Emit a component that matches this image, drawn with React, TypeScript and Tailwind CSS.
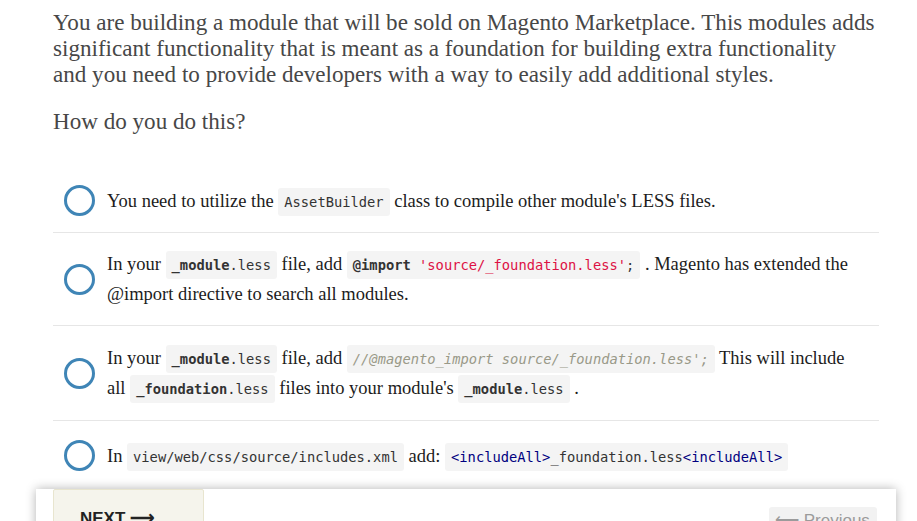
const serif = { fontFamily: '"Liberation Serif", Georgia, serif' }

function Code({ children }: { children: React.ReactNode }) {
  return (
    <code className="inline-block align-baseline bg-[#f4f4f4] rounded-[3px] px-[6px] py-[5px] leading-[18px] text-[13.75px] text-[#333] font-['DejaVu_Sans_Mono','Liberation_Mono',monospace]">
      {children}
    </code>
  )
}

function Radio() {
  return <div className="shrink-0 w-[31px] h-[31px] rounded-full border-[3px] border-[#3f85b6] ml-[11px] mr-[12px]" />
}

function Option({ children, pad = 'py-[16px]', last }: { children: React.ReactNode; pad?: string; last?: boolean }) {
  return (
    <div className={`flex items-center ${pad} ${last ? '' : 'border-b border-[#e6e6e6]'}`}>
      <Radio />
      <div className="whitespace-nowrap text-[18.5px] leading-[30px] text-[#1c1c1c] font-['Liberation_Serif',serif]">{children}</div>
    </div>
  )
}

export default function App() {
  return (
    <div className="w-[917px] h-[521px] overflow-hidden bg-white">
      <div className="ml-[36px] w-[860px]">
        <div className="px-[17px]">
          <p className="pt-[9px] text-[23.1px] leading-[26px] text-[#474747] whitespace-nowrap" style={serif}>
            You are building a module that will be sold on Magento Marketplace. This modules adds<br />
            significant functionality that is meant as a foundation for building extra functionality<br />
            and you need to provide developers with a way to easily add additional styles.
          </p>
          <p className="mt-[21px] text-[23.1px] leading-[26px] text-[#474747]" style={serif}>How do you do this?</p>

          <div className="mt-[35px]">
            <Option>
              You need to utilize the <Code>AssetBuilder</Code> class to compile other module's LESS files.
            </Option>
            <Option>
              In your <Code><b>_module</b>.less</Code> file, add <Code><b>@import</b> <span className="text-[#dd1144]">'source/_foundation.less'</span>;</Code> . Magento has extended the<br />
              @import directive to search all modules.
            </Option>
            <Option pad="py-[17px]">
              In your <Code><b>_module</b>.less</Code> file, add <Code><i className="text-[#999988]">//@magento_import source/_foundation.less';</i></Code> This will include<br />
              all <Code><b>_foundation</b>.less</Code> files into your module's <Code><b>_module</b>.less</Code> .
            </Option>
            <Option pad="pt-[19px] pb-[18px]" last>
              In <Code>view/web/css/source/includes.xml</Code> add: <Code><span className="text-[#000080]">&lt;includeAll&gt;</span>_foundation.less<span className="text-[#000080]">&lt;includeAll&gt;</span></Code>
            </Option>
          </div>
        </div>

        <div className="h-[80px] bg-white shadow-[0_0_10px_rgba(0,0,0,0.3)] flex items-start justify-between pl-[17px] pr-[19px] font-['Liberation_Sans',Arial,sans-serif]">
          <button className="w-[151px] text-left pl-[26px] pt-[17px] pb-[15px] bg-[#f5f4ec] border border-[#e8e5cf] rounded-[2px] text-[17px] leading-[24px] font-bold text-[#222] uppercase">
            Next ⟶
          </button>
          <button className="mt-[18px] w-[108px] pl-[6px] text-left pt-[2px] pb-[6px] bg-[#f2f2f2] rounded-[3px] text-[17px] leading-[24px] text-[#9b9b9b]">
            ⟵ Previous
          </button>
        </div>
      </div>
    </div>
  )
}
